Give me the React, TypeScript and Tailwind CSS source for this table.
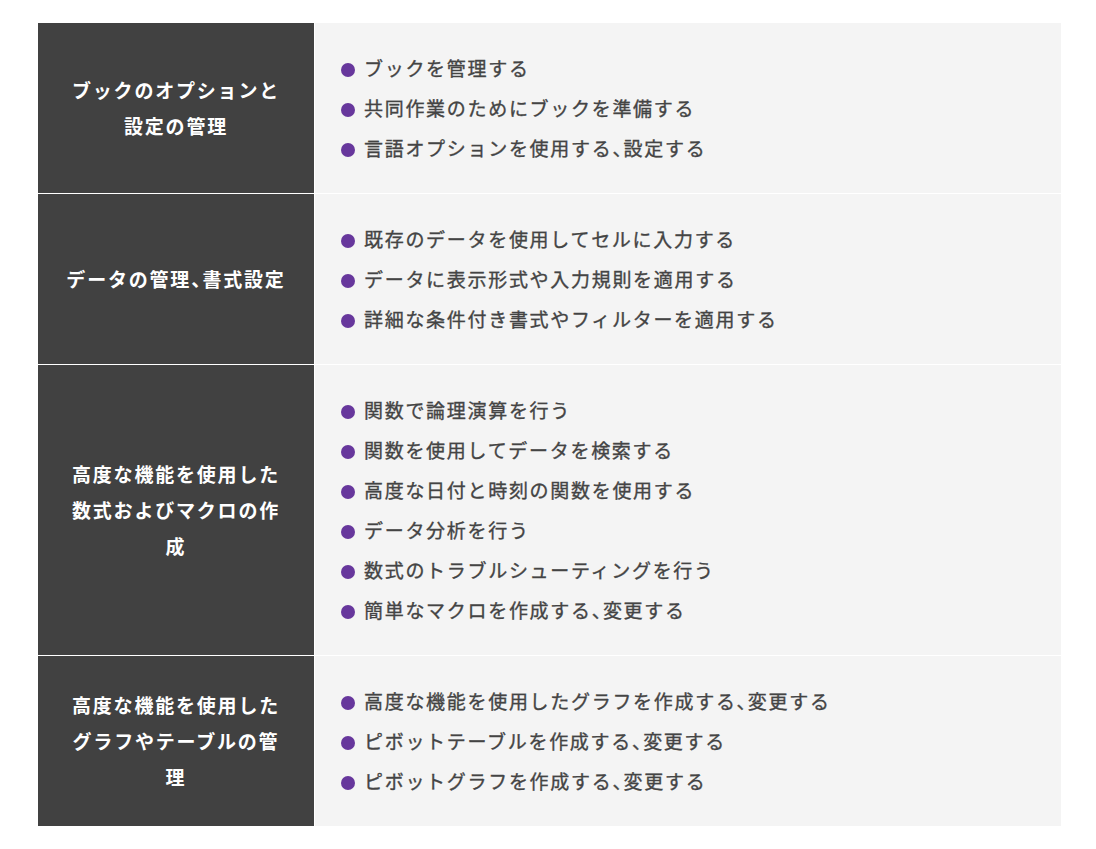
import React from "react";

type Row = { title: string; items: string[] };

const rows: Row[] = [
  {
    title: "ブックのオプションと設定の管理",
    items: ["ブックを管理する", "共同作業のためにブックを準備する", "言語オプションを使用する、設定する"],
  },
  {
    title: "データの管理、書式設定",
    items: [
      "既存のデータを使用してセルに入力する",
      "データに表示形式や入力規則を適用する",
      "詳細な条件付き書式やフィルターを適用する",
    ],
  },
  {
    title: "高度な機能を使用した数式およびマクロの作成",
    items: [
      "関数で論理演算を行う",
      "関数を使用してデータを検索する",
      "高度な日付と時刻の関数を使用する",
      "データ分析を行う",
      "数式のトラブルシューティングを行う",
      "簡単なマクロを作成する、変更する",
    ],
  },
  {
    title: "高度な機能を使用したグラフやテーブルの管理",
    items: ["高度な機能を使用したグラフを作成する、変更する", "ピボットテーブルを作成する、変更する", "ピボットグラフを作成する、変更する"],
  },
];

function JText({ text }: { text: string }) {
  const parts = text.split("、");
  return (
    <>
      {parts.map((p, i) => (
        <React.Fragment key={i}>
          {p}
          {i < parts.length - 1 && <span className="[font-feature-settings:'halt']">、</span>}
        </React.Fragment>
      ))}
    </>
  );
}

export default function App() {
  return (
    <div className="min-h-[849px] bg-white pt-[23px] pl-[38px] pr-[35px] font-['Noto_Sans_CJK_JP','Noto_Sans',sans-serif]">
      <div className="flex flex-col gap-px">
        {rows.map((r, i) => (
          <div key={i} className="flex">
            <div className="w-[276px] shrink-0 bg-[#414141] flex items-center justify-center px-[27px]">
              <p className="text-white text-[19px] leading-[36px] font-bold tracking-[1.8px] text-center">
                <JText text={r.title} />
              </p>
            </div>
            <div className="flex-1 bg-[#f4f4f4] ml-px py-[25px] pl-[26px]">
              <ul>
                {r.items.map((it, j) => (
                  <li
                    key={j}
                    className="flex items-center h-[40px] text-[19px] font-normal text-[#444444] tracking-[1.7px] [-webkit-text-stroke:0.35px_#444444]"
                  >
                    <span className="w-[14px] h-[14px] rounded-full bg-[#67379c] mt-[3px] mr-[9px] shrink-0" />
                    <span>
                      <JText text={it} />
                    </span>
                  </li>
                ))}
              </ul>
            </div>
          </div>
        ))}
      </div>
    </div>
  );
}
